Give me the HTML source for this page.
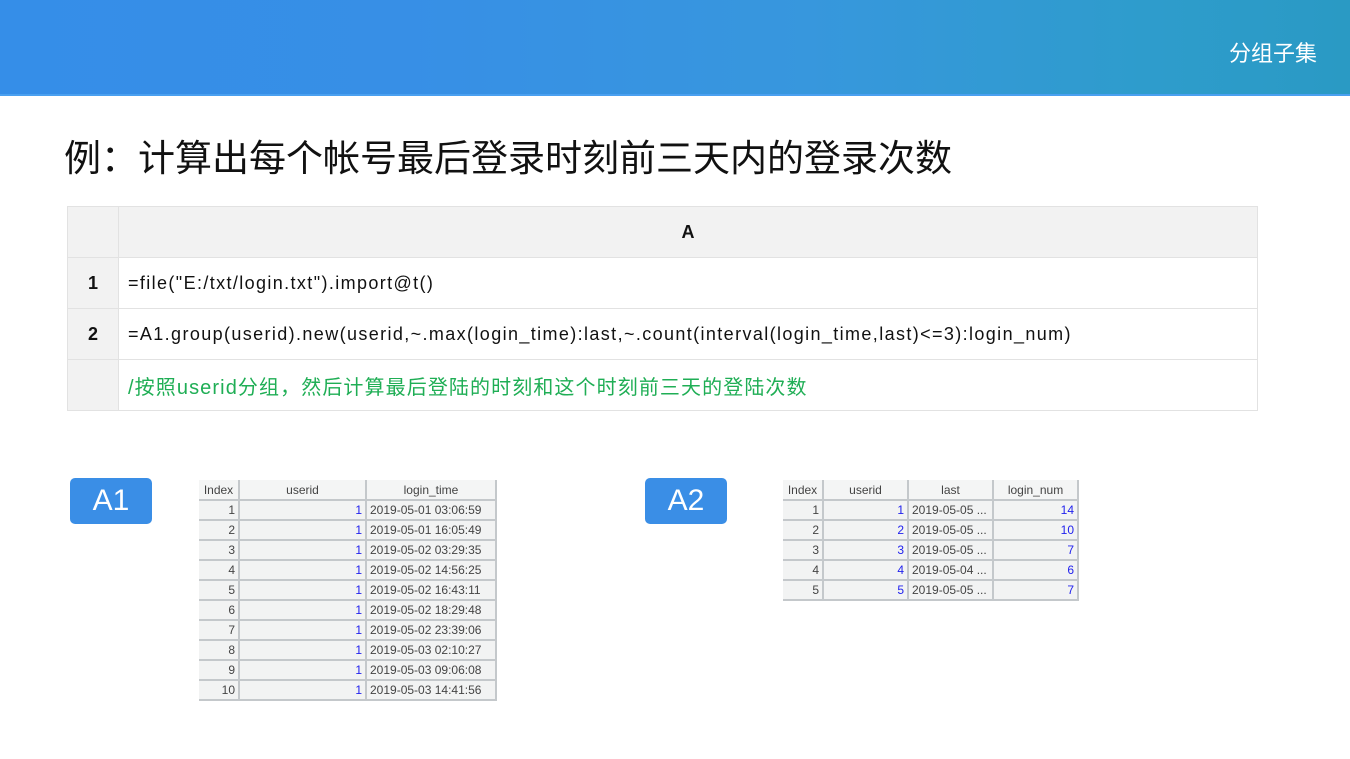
<!DOCTYPE html>
<html><head><meta charset="utf-8"><style>
*{margin:0;padding:0;box-sizing:border-box}
body{width:1350px;height:759px;background:#fff;position:relative;overflow:hidden;font-family:"Liberation Sans","Noto Sans CJK SC",sans-serif}
.hdr{position:absolute;left:0;top:0;width:1350px;height:96px;background:linear-gradient(90deg,#358ee8 0%,#378fe6 30%,#3797dd 60%,#2e9ccc 85%,#2a9ac4 100%)}
.hdr:after{content:"";position:absolute;left:0;right:0;bottom:0;height:2px;background:#4aa0f0}
.ht{position:absolute;right:33px;top:36px;color:#fff;font-size:22px}
.title{position:absolute;left:64px;top:128px;font-size:37px;color:#111;font-family:"Noto Sans CJK SC",sans-serif;letter-spacing:0}
.mt{position:absolute;left:67px;top:206px;border-collapse:collapse}
.mt td{border:1px solid #e2e2e2;height:51px;font-size:18px;color:#111}
.mt td.i{width:51px;background:#f2f2f2;text-align:center;font-weight:bold;font-size:18px}
.mt td.c{width:1139px;padding-left:9px;letter-spacing:1.38px}
.mt tr.h td{background:#f2f2f2}
.lab{position:absolute;top:478px;width:82px;height:46px;background:#3a8ee6;border-radius:5px;color:#fff;font-size:30px;text-align:center;line-height:46px}
.st{position:absolute;border-collapse:collapse;font-size:12px;color:#444;background:#f2f3f3}
.st td{border:1px solid #c4c8cb;border-width:0 2px 2px 0;height:20px;padding:0 3px;text-align:right}
.st tr.h td{text-align:center;background:#f4f5f5}
.st td.b{color:#2222ee}
.st td.l{text-align:left}
</style></head><body>
<div class="hdr"><div class="ht">分组子集</div></div>
<div class="title">例：计算出每个帐号最后登录时刻前三天内的登录次数</div>
<table class="mt">
<tr class="h"><td class="i"></td><td class="c" style="text-align:center;font-weight:bold;padding:0;letter-spacing:0">A</td></tr>
<tr><td class="i">1</td><td class="c">=file("E:/txt/login.txt").import@t()</td></tr>
<tr><td class="i">2</td><td class="c">=A1.group(userid).new(userid,~.max(login_time):last,~.count(interval(login_time,last)&lt;=3):login_num)</td></tr>
<tr><td class="i"></td><td class="c" style="color:#1fae55;font-size:20px;letter-spacing:1.1px">/按照userid分组，然后计算最后登陆的时刻和这个时刻前三天的登陆次数</td></tr>
</table>
<div class="lab" style="left:70px">A1</div>
<div class="lab" style="left:645px">A2</div>
<table class="st" style="left:199px;top:480px;width:298px">
<tr class="h"><td style="width:40px">Index</td><td style="width:127px">userid</td><td>login_time</td></tr>
<tr><td>1</td><td class="b">1</td><td class="l">2019-05-01 03:06:59</td></tr>
<tr><td>2</td><td class="b">1</td><td class="l">2019-05-01 16:05:49</td></tr>
<tr><td>3</td><td class="b">1</td><td class="l">2019-05-02 03:29:35</td></tr>
<tr><td>4</td><td class="b">1</td><td class="l">2019-05-02 14:56:25</td></tr>
<tr><td>5</td><td class="b">1</td><td class="l">2019-05-02 16:43:11</td></tr>
<tr><td>6</td><td class="b">1</td><td class="l">2019-05-02 18:29:48</td></tr>
<tr><td>7</td><td class="b">1</td><td class="l">2019-05-02 23:39:06</td></tr>
<tr><td>8</td><td class="b">1</td><td class="l">2019-05-03 02:10:27</td></tr>
<tr><td>9</td><td class="b">1</td><td class="l">2019-05-03 09:06:08</td></tr>
<tr><td>10</td><td class="b">1</td><td class="l">2019-05-03 14:41:56</td></tr>
</table>
<table class="st" style="left:783px;top:480px;width:296px">
<tr class="h"><td style="width:40px">Index</td><td style="width:85px">userid</td><td style="width:85px">last</td><td>login_num</td></tr>
<tr><td>1</td><td class="b">1</td><td class="l">2019-05-05 ...</td><td class="b">14</td></tr>
<tr><td>2</td><td class="b">2</td><td class="l">2019-05-05 ...</td><td class="b">10</td></tr>
<tr><td>3</td><td class="b">3</td><td class="l">2019-05-05 ...</td><td class="b">7</td></tr>
<tr><td>4</td><td class="b">4</td><td class="l">2019-05-04 ...</td><td class="b">6</td></tr>
<tr><td>5</td><td class="b">5</td><td class="l">2019-05-05 ...</td><td class="b">7</td></tr>
</table>
</body></html>
